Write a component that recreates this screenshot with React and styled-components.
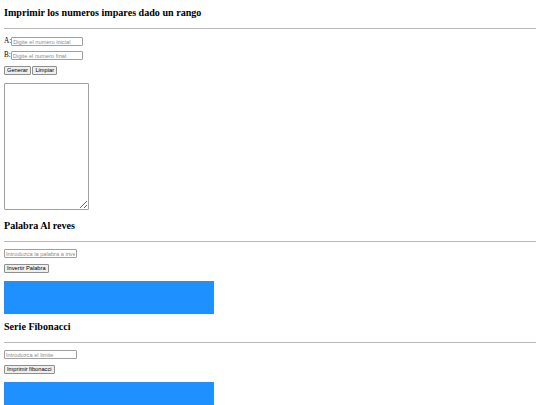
import React from "react";
import styled, { createGlobalStyle } from "styled-components";

const Global = createGlobalStyle`
  html, body { margin: 0; padding: 0; background: #fff; }
  body { font-family: "Liberation Serif", "Times New Roman", serif; color: #000; }
`;

const Page = styled.div`
  padding: 0 4px;
`;

const Section = styled.section`
  display: flex;
  flex-direction: column;
  align-items: flex-start;
`;

const Title = styled.h3`
  margin: ${(p) => p.$top}px 0 0;
  font-size: 10.1px;
  line-height: 11px;
  font-weight: bold;
`;

const Rule = styled.hr`
  align-self: stretch;
  margin: 10px 0 0;
  height: 0;
  border: none;
  border-top: 1px solid #b8b8b8;
`;

const Row = styled.div`
  display: flex;
  align-items: center;
  margin-top: ${(p) => p.$gap}px;
  height: 9px;
`;

const Label = styled.label`
  font-family: "Liberation Serif", serif;
  font-size: 7.2px;
  line-height: 9px;
`;

const Input = styled.input`
  box-sizing: border-box;
  width: ${(p) => p.$w || 73}px;
  height: 9px;
  padding: 0 1px;
  margin: 0;
  border: 1px solid #a0a0a0;
  border-radius: 1px;
  font-family: "Liberation Sans", Arial, sans-serif;
  font-size: 5.7px;
  line-height: 7px;
  &::placeholder { color: #8c8c8c; }
`;

const Button = styled.button`
  box-sizing: border-box;
  height: 9px;
  padding: 0 2px;
  margin: 0 1.5px 0 0;
  border: 1px solid #8f8f8f;
  border-radius: 1px;
  background: #efefef;
  font-family: "Liberation Sans", Arial, sans-serif;
  font-size: 5.7px;
  line-height: 7px;
  color: #000;
`;

const Output = styled.textarea`
  box-sizing: border-box;
  width: 85px;
  height: 127px;
  margin: 8px 0 0;
  padding: 1px;
  border: 1px solid #a0a0a0;
  border-radius: 1px;
  resize: both;
  font-size: 5.7px;
`;

const Result = styled.div`
  width: 210px;
  height: 33px;
  margin-top: 8px;
  background: #1e90ff;
`;

export default function App() {
  return (
    <>
      <Global />
      <Page>
        <Section>
          <Title $top={7}>Imprimir los numeros impares dado un rango</Title>
          <Rule />
          <Row $gap={8}>
            <Label>A:</Label>
            <Input $w={72} placeholder="Digite el numero inicial" />
          </Row>
          <Row $gap={5}>
            <Label>B:</Label>
            <Input $w={72} placeholder="Digite el numero final" />
          </Row>
          <Row $gap={6}>
            <Button>Generar</Button>
            <Button>Limpiar</Button>
          </Row>
          <Output />
        </Section>
        <Section>
          <Title $top={10}>Palabra Al reves</Title>
          <Rule />
          <Row $gap={7}>
            <Input placeholder="Introduzca la palabra a invertir" />
          </Row>
          <Row $gap={6}>
            <Button>Invertir Palabra</Button>
          </Row>
          <Result />
        </Section>
        <Section>
          <Title $top={7}>Serie Fibonacci</Title>
          <Rule />
          <Row $gap={7}>
            <Input placeholder="Introduzca el limite" />
          </Row>
          <Row $gap={6}>
            <Button>Imprimir fibonacci</Button>
          </Row>
          <Result />
        </Section>
      </Page>
    </>
  );
}
